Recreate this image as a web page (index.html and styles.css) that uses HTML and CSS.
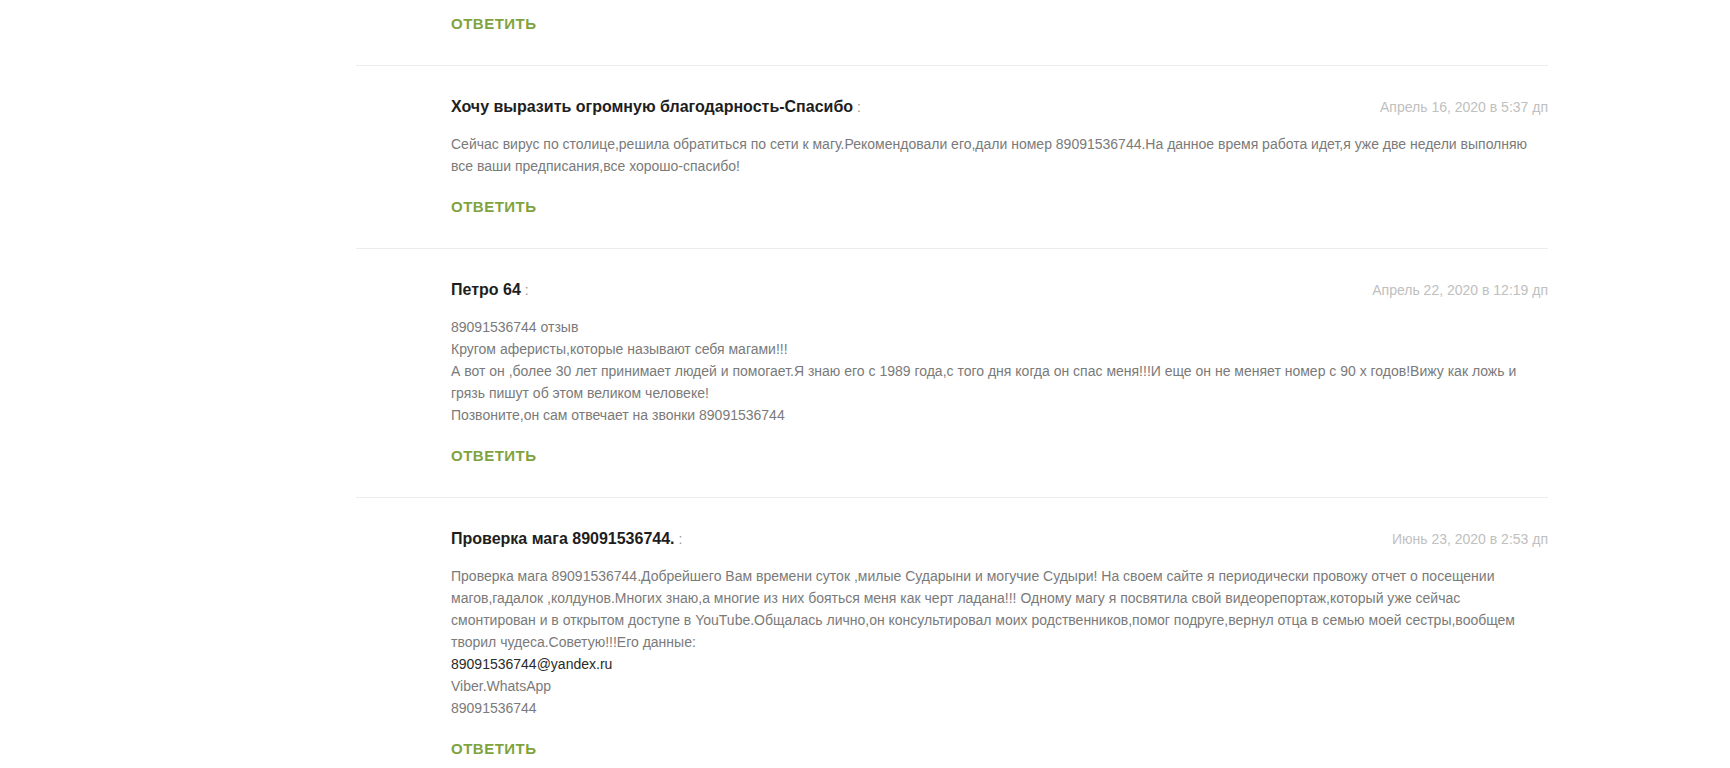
FILE: index.html
```html
<!DOCTYPE html>
<html lang="ru">
<head>
<meta charset="utf-8">
<title>Комментарии</title>
<link rel="stylesheet" href="styles.css">
</head>
<body>
<div class="comments">
  <div class="comment comment-tail">
    <a class="reply" href="#">Ответить</a>
  </div>

  <div class="comment">
    <div class="comment-head">
      <div class="author"><b>Хочу выразить огромную благодарность-Спасибо</b><span class="says"> :</span></div>
      <div class="date">Апрель 16, 2020 в 5:37 дп</div>
    </div>
    <div class="comment-body">
      <p>Сейчас вирус по столице,решила обратиться по сети к магу.Рекомендовали его,дали номер 89091536744.На данное время работа идет,я уже две недели выполняю все ваши предписания,все хорошо-спасибо!</p>
    </div>
    <a class="reply" href="#">Ответить</a>
  </div>

  <div class="comment">
    <div class="comment-head">
      <div class="author"><b>Петро 64</b><span class="says"> :</span></div>
      <div class="date">Апрель 22, 2020 в 12:19 дп</div>
    </div>
    <div class="comment-body">
      <p>89091536744 отзыв<br>Кругом аферисты,которые называют себя магами!!!<br>А вот он ,более 30 лет принимает людей и помогает.Я знаю его с 1989 года,с того дня когда он спас меня!!!И еще он не меняет номер с 90 х годов!Вижу как ложь и грязь пишут об этом великом человеке!<br>Позвоните,он сам отвечает на звонки 89091536744</p>
    </div>
    <a class="reply" href="#">Ответить</a>
  </div>

  <div class="comment">
    <div class="comment-head">
      <div class="author"><b>Проверка мага 89091536744.</b><span class="says"> :</span></div>
      <div class="date">Июнь 23, 2020 в 2:53 дп</div>
    </div>
    <div class="comment-body">
      <p>Проверка мага 89091536744.Добрейшего Вам времени суток ,милые Сударыни и могучие Судыри! На своем сайте я периодически провожу отчет о посещении магов,гадалок ,колдунов.Многих знаю,а многие из них бояться меня как черт ладана!!! Одному магу я посвятила свой видеорепортаж,который уже сейчас смонтирован и в открытом доступе в YouTube.Общалась лично,он консультировал моих родственников,помог подруге,вернул отца в семью моей сестры,вообщем творил чудеса.Советую!!!Его данные:<br><a class="mail" href="#">89091536744@yandex.ru</a><br>Viber.WhatsApp<br>89091536744</p>
    </div>
    <a class="reply" href="#">Ответить</a>
  </div>
</div>
</body>
</html>
```

FILE: styles.css
```css
html, body {
  margin: 0;
  padding: 0;
  background: #fff;
}

body {
  font-family: "Liberation Sans", Arial, sans-serif;
  color: #777;
  overflow: hidden;
}

.comments {
  margin-left: 356px;
  width: 1192px;
}

.comment {
  border-top: 1px solid #ececec;
  padding: 30px 0 30px 95px;
}

.comment-tail {
  border-top: none;
  padding-top: 13px;
}

.comment-head {
  display: flex;
  justify-content: space-between;
  align-items: baseline;
  height: 22px;
  line-height: 22px;
}

.author b {
  font-size: 16px;
  font-weight: bold;
  color: #1e1e1e;
}

.says {
  font-size: 14px;
  color: #9a9a9a;
}

.date {
  font-size: 14px;
  color: #c0c0c0;
}

.comment-body {
  margin-top: 15px;
  font-size: 14px;
  line-height: 22px;
  color: #7a7a7a;
}

.comment-body p {
  margin: 0;
}

.mail {
  color: #2a2a2a;
  text-decoration: none;
}

.reply {
  display: block;
  margin-top: 19px;
  height: 22px;
  line-height: 22px;
  font-size: 15px;
  font-weight: bold;
  text-transform: uppercase;
  letter-spacing: 0.5px;
  color: #7fa33d;
  text-decoration: none;
}

.comment-tail .reply {
  margin-top: 0;
}
```
